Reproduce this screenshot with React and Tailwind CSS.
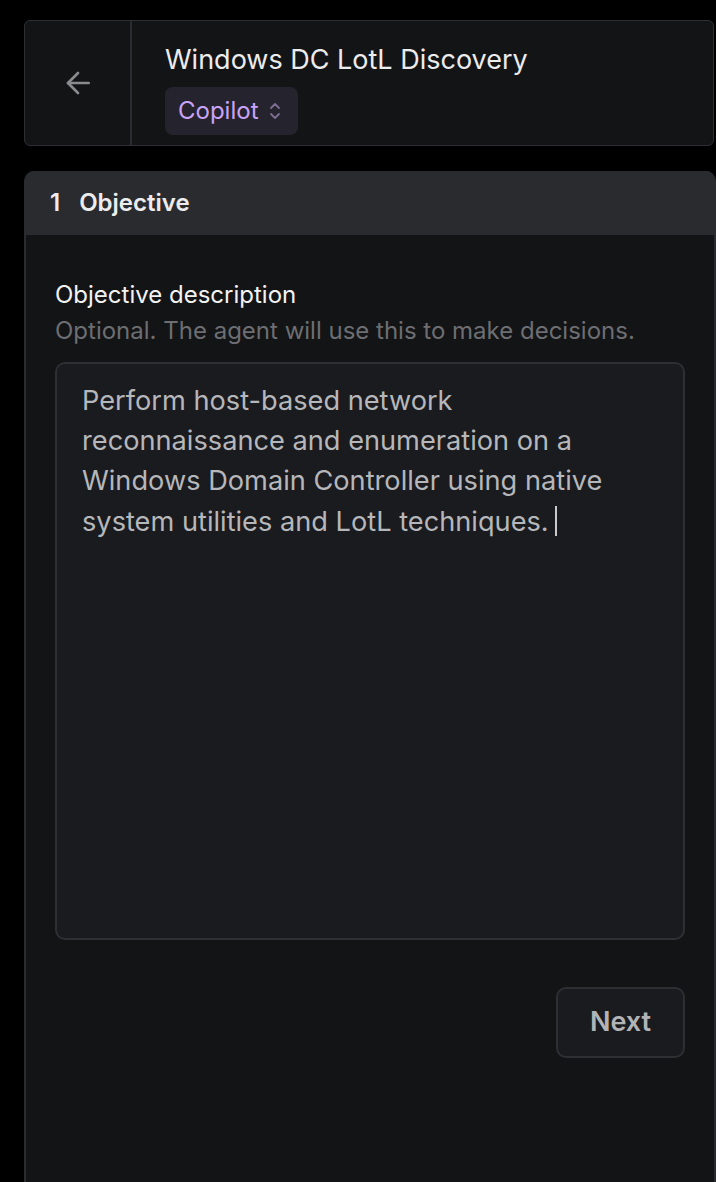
import React from 'react';

function ArrowLeft() {
  return (
    <svg width="32" height="32" viewBox="0 0 24 24" fill="none" stroke="#8a8b8f" strokeWidth="2" strokeLinecap="round" strokeLinejoin="round">
      <path d="M20 12H4.5" />
      <path d="M12 19.5L4.5 12 12 4.5" />
    </svg>
  );
}

function Chevrons() {
  return (
    <svg width="14" height="22" viewBox="0 0 14 22" fill="none" stroke="#7c6d92" strokeWidth="1.8" strokeLinecap="round" strokeLinejoin="round">
      <path d="M3 8l4-4 4 4" />
      <path d="M3 14l4 4 4-4" />
    </svg>
  );
}

export default function App() {
  return (
    <div className="min-h-[1182px] bg-black pt-5 pl-6 font-['Inter','Liberation_Sans',sans-serif] text-[#ececee]">
      {/* page header */}
      <div className="flex h-[126px] rounded-md border border-[#2e2f33] bg-[#131416] mr-[2px]">
        <div className="flex w-[107px] shrink-0 items-center justify-center border-r-2 border-[#2a2b2f]">
          <ArrowLeft />
        </div>
        <div className="flex flex-col pl-[33px] pt-[23px]">
          <h1 className="text-[27px] leading-[32px] font-normal text-[#ececee]">Windows DC LotL Discovery</h1>
          <button className="mt-[11px] flex h-[48px] w-[133px] items-center gap-[10px] rounded-lg bg-[#25232d] pl-[13px] text-[24px] text-[#c9a3f7]">
            <span>Copilot</span>
            <Chevrons />
          </button>
        </div>
      </div>

      {/* step card */}
      <div className="mt-[25px] flex min-h-[1011px] flex-col rounded-t-[10px] border-x-2 border-[#2a2b2f] bg-[#131416]">
        <div className="flex h-[64px] items-center gap-[19px] rounded-t-[8px] bg-[#2a2b2f] pl-[24px] text-[24px] font-semibold text-[#ececee]">
          <span>1</span>
          <span>Objective</span>
        </div>
        <div className="flex flex-col px-[29px] pt-[45px]">
          <label className="text-[24px] leading-[30px] text-[#f2f2f3]">Objective description</label>
          <p className="mt-[6px] text-[24px] leading-[30px] text-[#6d6e72]">Optional. The agent will use this to make decisions.</p>
          <div className="mt-[16px] h-[578px] rounded-[10px] border-2 border-[#2e2f33] bg-[#1a1b1e] pl-[25px] pr-[60px] pt-[17px]">
            <p className="text-[27.2px] leading-[40px] text-[#b6b7bb]">
              Perform host-based network reconnaissance and enumeration on a Windows Domain Controller using native system utilities and LotL techniques.
              <span className="ml-[6px] inline-block h-[30px] w-[2px] translate-y-[5px] bg-[#c8c9cc]" />
            </p>
          </div>
          <div className="mt-[47px] flex justify-end">
            <button className="h-[71px] w-[129px] rounded-[10px] border-2 border-[#2e2f33] bg-[#1a1b1e] text-[27px] font-semibold text-[#b2b3b7]">
              Next
            </button>
          </div>
        </div>
      </div>
    </div>
  );
}
